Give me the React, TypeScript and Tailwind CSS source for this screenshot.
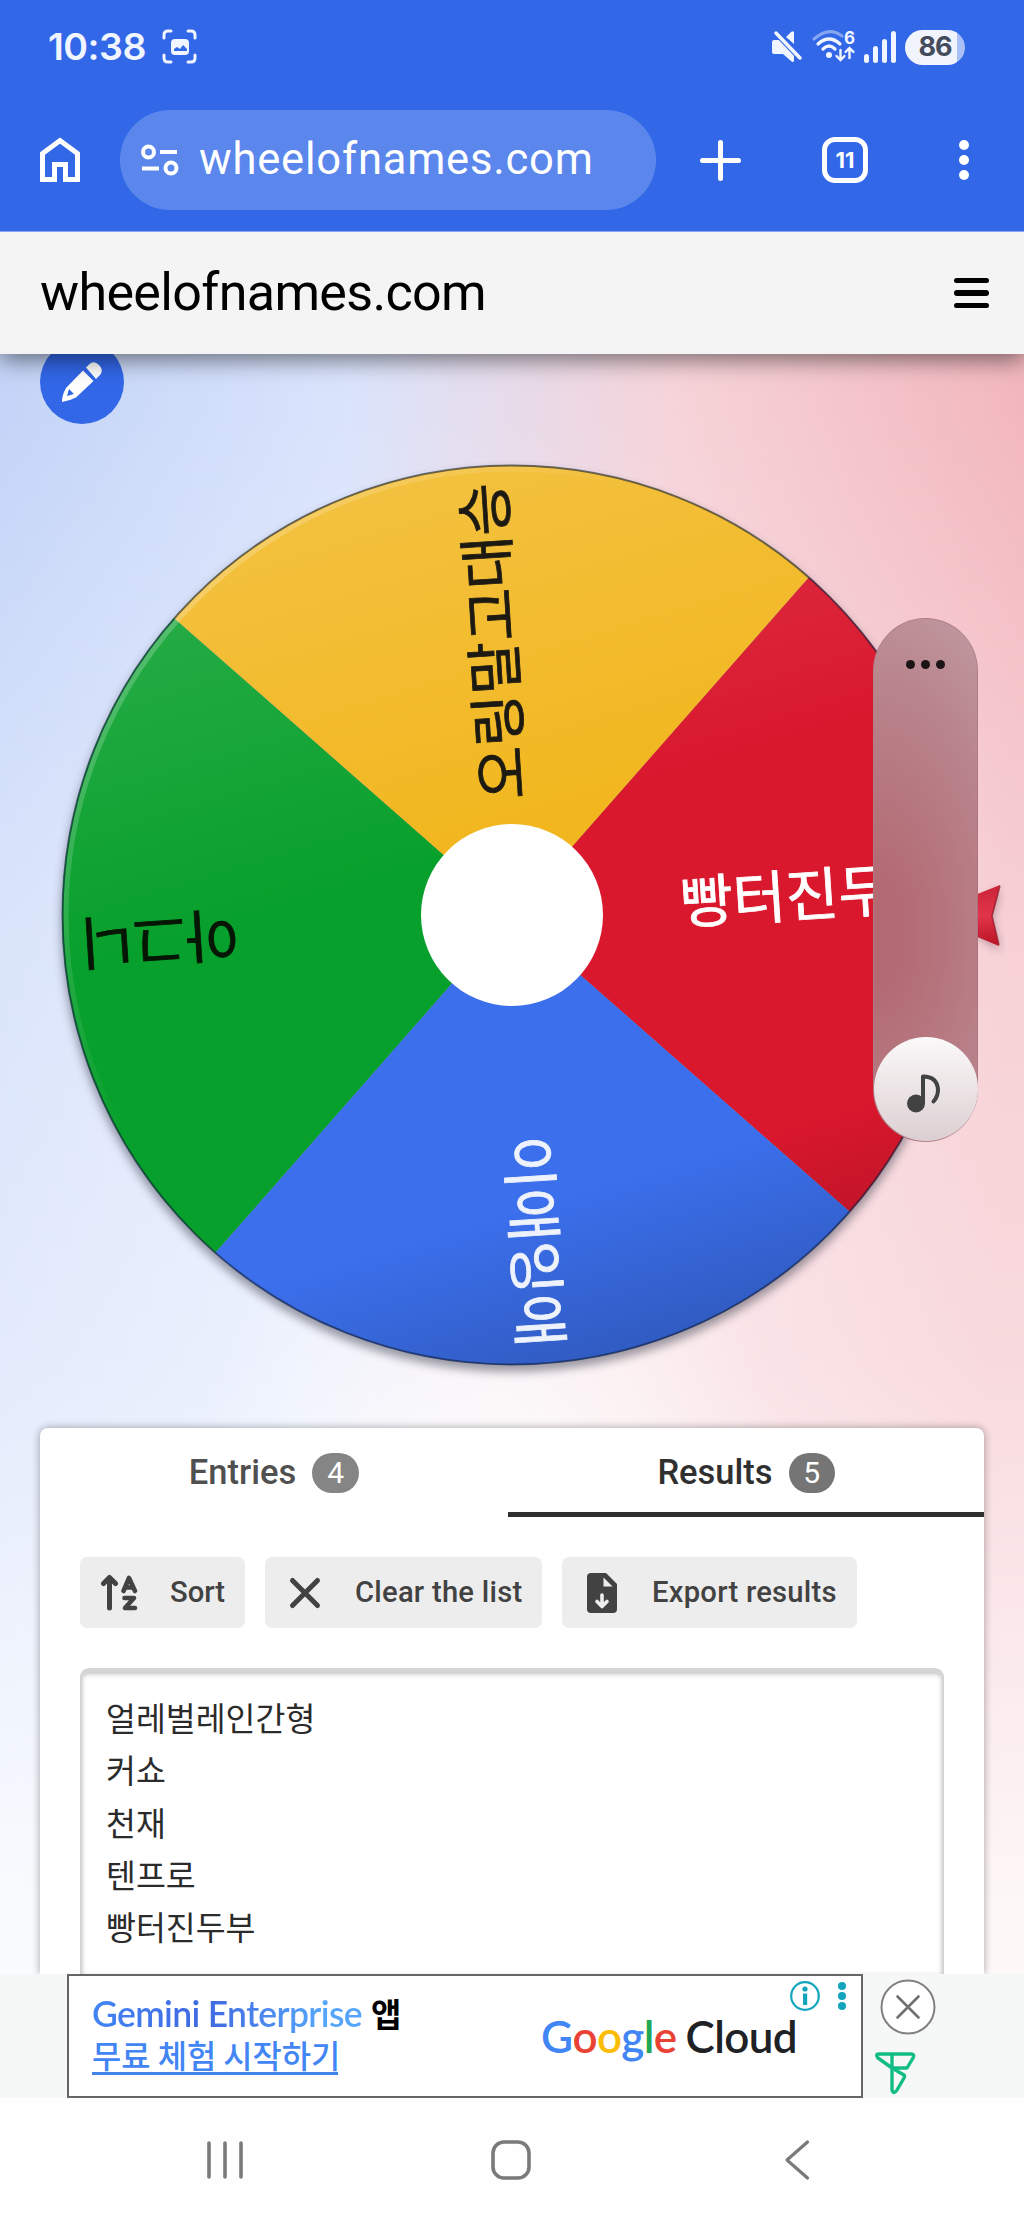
import type { ReactNode } from "react"

const slices = [
  { label: "빵터진두부", angle: -3.7, fill: "#d9172d", text: "#ffffff" },
  { label: "이애잉애", angle: 86.3, fill: "#3b6fec", text: "#eef2fc" },
  { label: "아그니", angle: 176.3, fill: "#08a02c", text: "#051605" },
  { label: "오링말고대승", angle: 266.3, fill: "#f2b71f", text: "#1c1a12" },
]

const results = ["얼레벌레인간형", "커쇼", "천재", "텐프로", "빵터진두부"]

function StatusBar() {
  return (
    <div className="flex h-[94px] items-center pl-12 pr-[59px] text-[#f0f5ff]">
      <span className="w-[99px] whitespace-nowrap font-[Inter] text-[37.500px] font-semibold leading-none tracking-[-0.500px]">10:38</span>
      <svg className="ml-[15px]" width="36" height="36" viewBox="0 0 36 36" fill="none" stroke="currentColor" strokeWidth="3" strokeLinecap="round">
        <path d="M2 9V6q0-4 4-4h3M26 2h3q4 0 4 4v3M33 26v3q0 4-4 4h-3M9 33H6q-4 0-4-4v-3" />
        <rect x="9" y="10" width="18" height="16" rx="4" fill="currentColor" stroke="none" />
        <path d="M12 22v-2l3-2 3 2 3-4 4 4v2z" fill="#3267e8" stroke="none" />
      </svg>
      <div className="ml-auto flex items-center">
        <svg width="32" height="34" viewBox="0 0 32 34" fill="currentColor">
          <path d="M3 10h7l13 12v9q-1 2-3 0l-8-7H3q-2 0-2-2V12q0-2 2-2zM15 7l5-5q3-2 3 1v11z" />
          <path d="M5 3l24 25" stroke="#3267e8" strokeWidth="5.500" />
          <path d="M5 3l24 25" stroke="currentColor" strokeWidth="3.500" strokeLinecap="round" />
        </svg>
        <svg className="ml-2 overflow-visible" width="46" height="34" viewBox="0 0 46 34" fill="none" stroke="currentColor" strokeWidth="3.200" strokeLinecap="round">
          <path d="M3 9q15-13 28-3" opacity=".45" />
          <path d="M7 14q11-10 22 0M12 19q6-6 12 0" />
          <circle cx="18" cy="25" r="3" fill="currentColor" stroke="none" />
          <path d="M29.500 20v10m-4-4l4 4 4-4M38.500 28V18m-4 4l4-4 4 4" strokeWidth="2.400" />
          <text x="33" y="14" fontSize="17" fontWeight="700" fontFamily="Inter" fill="currentColor" stroke="none">6</text>
        </svg>
        <div className="ml-[7px] flex h-8 items-end gap-1">
          <i className="h-[9px] w-[5px] rounded-full bg-[#f0f5ff]" />
          <i className="h-[17px] w-[5px] rounded-full bg-[#f0f5ff]" />
          <i className="h-[24px] w-[5px] rounded-full bg-[#f0f5ff]" />
          <i className="h-[32px] w-[5px] rounded-full bg-[#f0f5ff]" />
        </div>
        <div className="ml-[9px] flex h-[35px] w-[60px] items-center justify-center rounded-full bg-[linear-gradient(90deg,#f1f4fd_86%,#a9c0f6_86%)] font-[Inter] text-[27px] font-bold tracking-[-1px] text-[#444b5c]">
          86
        </div>
      </div>
    </div>
  )
}

function BrowserBar() {
  return (
    <div className="mt-4 flex h-[100px] items-center text-white">
      <svg className="ml-10" width="40" height="46" viewBox="0 0 40 46" fill="none" stroke="white" strokeWidth="5">
        <path d="M2.500 42.500V16.500L20 3.500l17.500 13v26h-12v-15h-11v15z" />
      </svg>
      <div className="ml-10 flex h-full w-[536px] items-center rounded-full bg-[#5b87ed] pl-5">
        <svg width="40" height="34" viewBox="0 0 40 34" fill="none" stroke="white" strokeWidth="4">
          <circle cx="8.500" cy="9" r="5.500" />
          <circle cx="31" cy="25" r="5.500" />
          <path d="M20 9h17M2 25.500h17" />
        </svg>
        <span className="ml-[19px] whitespace-nowrap font-[Roboto] text-[43.500px] leading-none tracking-[0.800px]">wheelofnames.com</span>
      </div>
      <svg className="ml-[44px]" width="41" height="41" viewBox="0 0 41 41" stroke="white" strokeWidth="5" strokeLinecap="round">
        <path d="M20.500 2.500v36M2.500 20.500h36" />
      </svg>
      <div className="ml-[81px] flex size-[46px] items-center justify-center rounded-[13px] border-[5px] border-white font-[Inter] text-[22px] font-bold">
        11
      </div>
      <div className="ml-[91px] flex flex-col gap-[5px]">
        <i className="size-[10px] rounded-full bg-white" />
        <i className="size-[10px] rounded-full bg-white" />
        <i className="size-[10px] rounded-full bg-white" />
      </div>
    </div>
  )
}

function SiteBar() {
  return (
    <div className="relative z-10 flex h-[122px] items-center justify-between bg-[#f4f4f4] pl-10 pr-[35px] shadow-[0_6px_22px_rgba(0,0,0,0.5)]">
      <span className="font-[Roboto] text-[52px] leading-none tracking-[-0.650px] text-black">wheelofnames.com</span>
      <div className="flex w-[35px] flex-col gap-[7px] pb-px">
        <i className="h-[5px] rounded-full bg-black" />
        <i className="h-[6px] rounded-full bg-black" />
        <i className="h-[5px] rounded-full bg-black" />
      </div>
    </div>
  )
}

function Wheel() {
  return (
    <svg className="absolute left-0 top-0" width="1024" height="1073" viewBox="0 354 1024 1073">
      <defs>
        <linearGradient id="shine" x1="0.350" y1="0" x2="0.650" y2="1">
          <stop offset="0" stopColor="#fff" stopOpacity=".15" />
          <stop offset=".42" stopColor="#fff" stopOpacity="0" />
          <stop offset=".8" stopColor="#000" stopOpacity="0" />
          <stop offset="1" stopColor="#000" stopOpacity=".2" />
        </linearGradient>
        <linearGradient id="rim" x1="0" y1="0" x2="1" y2="0.800">
          <stop offset="0" stopColor="#fff" stopOpacity=".35" />
          <stop offset=".4" stopColor="#fff" stopOpacity="0" />
        </linearGradient>
        <linearGradient id="pointer" x1="0" y1="0" x2="0" y2="1">
          <stop offset="0" stopColor="#c92438" />
          <stop offset=".5" stopColor="#e3344a" />
          <stop offset="1" stopColor="#b81325" />
        </linearGradient>
        <filter id="soft" x="-10%" y="-10%" width="120%" height="120%">
          <feGaussianBlur stdDeviation="5" />
        </filter>
      </defs>
      <circle cx="512" cy="921" r="451" fill="#3c3c50" opacity=".5" filter="url(#soft)" />
      {slices.map((slice) => (
        <path
          key={slice.label}
          d="M0 0L318.200 -318.200A450 450 0 0 1 318.200 318.200Z"
          transform={`translate(512 915) rotate(${slice.angle})`}
          fill={slice.fill}
        />
      ))}
      <circle cx="512" cy="915" r="450" fill="url(#shine)" />
      {slices.map((slice) => (
        <text
          key={slice.label}
          x="433"
          y="20"
          transform={`translate(512 915) rotate(${slice.angle})`}
          textAnchor="end"
          fontSize="57.500"
          fontFamily="'Noto Sans CJK KR', sans-serif"
          fill={slice.text}
          stroke={slice.text}
          strokeWidth="0.800"
        >
          {slice.label}
        </text>
      ))}
      <circle cx="512" cy="915" r="446" fill="none" stroke="url(#rim)" strokeWidth="5" />
      <circle cx="512" cy="915" r="449.500" fill="none" stroke="#10203a" strokeOpacity=".6" strokeWidth="2" />
      <circle cx="512" cy="915" r="91" fill="#fff" />
      <path d="M950 918L1000 890l-8 29 8 31z" fill="#3c2030" opacity=".4" filter="url(#soft)" />
      <path d="M925 915L1000 885l-8 31 7 30z" fill="url(#pointer)" />
      <path d="M1000 886l-8 30 7 29" fill="none" stroke="#8e0f1e" strokeOpacity=".7" strokeWidth="1.500" />
    </svg>
  )
}

function VolumeSlider() {
  return (
    <div className="absolute left-[873px] top-[264px] flex h-[524px] w-[105px] flex-col items-center justify-between rounded-full border border-[#a87880]/60 bg-[radial-gradient(ellipse_190px_360px_at_0%_60%,#b36a73_15%,#b9858d_70%,#c0989f)]">
      <div className="mt-[41px] flex gap-[6px]">
        <i className="size-[9px] rounded-full bg-[#1c1416]" />
        <i className="size-[9px] rounded-full bg-[#1c1416]" />
        <i className="size-[9px] rounded-full bg-[#1c1416]" />
      </div>
      <div className="flex size-[104px] shrink-0 items-center justify-center rounded-full bg-linear-to-b from-[#fbf9f9] to-[#dccfd2] pr-1 pt-[7px]">
        <svg width="36" height="40" viewBox="0 0 36 40">
          <circle cx="10" cy="30.500" r="9" fill="#424242" />
          <path d="M17 30V3.500q14 0 15 13 0 7-4.500 12" fill="none" stroke="#424242" strokeWidth="4" strokeLinecap="round" strokeLinejoin="round" />
        </svg>
      </div>
    </div>
  )
}

function WheelArea() {
  return (
    <div className="relative h-[1074px]">
      <Wheel />
      <div className="absolute left-10 top-[-14px] flex size-[84px] items-center justify-center rounded-full bg-[#3267e8]">
        <svg width="42" height="42" viewBox="0 0 42 42" fill="white">
          <path d="M22 9.500L32.500 20 15 36.500Q8 40 1 41q0-7 4-14zM8 28l-2 7 7-2zM25 6.500l3-3Q33-1 38 4t1 10l-4 4z" fillRule="evenodd" />
        </svg>
      </div>
      <VolumeSlider />
    </div>
  )
}

function ToolButton({ icon, label, className }: { icon: ReactNode; label: string; className: string }) {
  return (
    <button className={`flex h-[71px] items-center rounded-[7px] bg-[#ededed] pl-5 text-[29.200px] font-medium text-[#424242] ${className}`}>
      {icon}
      <span className="ml-[30px] whitespace-nowrap leading-none">{label}</span>
    </button>
  )
}

function ResultsPanel() {
  return (
    <div className="mx-10 h-[546px] rounded-t-lg bg-white font-[Roboto] shadow-[0_0_9px_rgba(0,0,0,0.35)]">
      <div className="flex h-[89px]">
        <div className="flex w-[468px] items-center justify-center text-[34.500px] font-medium text-[#505050]">
          Entries
          <span className="ml-4 flex h-10 w-[47px] items-center justify-center rounded-full bg-[#858585] text-[30px] font-normal text-white">4</span>
        </div>
        <div className="flex w-[476px] items-center justify-center border-b-[5px] border-[#303030] pt-[5px] text-[34.500px] font-medium text-[#303030]">
          Results
          <span className="ml-4 flex h-10 w-[46px] items-center justify-center rounded-full bg-[#757575] text-[30px] font-normal text-white">5</span>
        </div>
      </div>
      <div className="flex gap-5 px-10 pt-10">
        <ToolButton
          className="w-[165px]"
          label="Sort"
          icon={
            <svg width="40" height="40" viewBox="0 0 40 40" fill="none" stroke="#424242" strokeWidth="5" strokeLinecap="round" strokeLinejoin="round">
              <path d="M9.500 35V5M3.500 10.500l6-6 6 6" />
              <path d="M23.500 18l5.500-13 6 13M26 14.500h7M24.500 25H34l-9 10h10" strokeWidth="4.600" />
            </svg>
          }
        />
        <ToolButton
          className="w-[277px] tracking-[0.250px]"
          label="Clear the list"
          icon={
            <svg width="40" height="40" viewBox="0 0 40 40" stroke="#424242" strokeWidth="5" strokeLinecap="round">
              <path d="M7.500 7.500l25 25M32.500 7.500l-25 25" />
            </svg>
          }
        />
        <ToolButton
          className="w-[295px] tracking-[0.250px]"
          label="Export results"
          icon={
            <svg width="40" height="40" viewBox="0 0 40 40" fill="#424242">
              <path d="M9 0h15l11 11v25q0 4-4 4H9q-4 0-4-4V4q0-4 4-4z" />
              <path d="M21.500 4.500v9h9z" fill="#ededed" />
              <path d="M20 22v11M15 28.500l5 5 5-5" fill="none" stroke="#ededed" strokeWidth="3.600" strokeLinecap="round" strokeLinejoin="round" />
            </svg>
          }
        />
      </div>
      <div className="mx-10 mt-10 h-[306px] rounded-t-[9px] border-x-2 border-t-4 border-[#d4d4d4] pl-[24px] pt-[19px] font-['Noto_Sans_CJK_KR',sans-serif] text-[32.500px] leading-[52.300px] text-[#2b2b2b] shadow-[inset_0_2px_5px_rgba(0,0,0,0.25)]">
        {results.map((name) => (
          <div key={name}>{name}</div>
        ))}
      </div>
    </div>
  )
}

function AdBanner() {
  return (
    <div className="flex h-[124px] bg-[#f6f7f7] pl-[67px]">
      <div className="relative flex h-full w-[796px] items-center border-2 border-[#666] bg-white pl-[23px]">
        <div className="w-[449px] pb-[5px]">
          <div className="flex h-[41px] items-center gap-[9px] whitespace-nowrap leading-[41px]">
            <span className="bg-[linear-gradient(90deg,#4285f4,#4169e1_42%,#55a5fa_85%)] bg-clip-text font-[Lato] text-[35.500px] font-semibold tracking-[-0.650px] text-transparent">
              Gemini Enterprise
            </span>
            <b className="font-['Noto_Sans_CJK_KR'] text-[33px]">앱</b>
          </div>
          <div className="mt-[3px] w-[246px] whitespace-nowrap border-b-[3px] border-[#4285e8] font-['Noto_Sans_CJK_KR'] text-[31.800px] font-medium leading-[35px] text-[#4285f4]">
            무료 체험 시작하기
          </div>
        </div>
        <div className="flex whitespace-nowrap font-[Lato] text-[44px] font-semibold tracking-[-0.650px] text-[#202124]">
          <span className="text-[#4285f4]">G</span>
          <span className="text-[#ea4335]">o</span>
          <span className="text-[#fbbc04]">o</span>
          <span className="text-[#4285f4]">g</span>
          <span className="text-[#1fa855]">l</span>
          <span className="mr-[9px] text-[#ea4335]">e</span>
          Cloud
        </div>
        <svg className="absolute right-[12px] top-1" width="60" height="32" viewBox="0 0 60 32" fill="#12a5bd">
          <circle cx="16" cy="16" r="13.800" fill="none" stroke="#12a5bd" strokeWidth="2.200" />
          <circle cx="16" cy="9" r="2.600" />
          <path d="M14 13.500h4.200V25H14z" />
          <circle cx="53" cy="6" r="4" />
          <circle cx="53" cy="16" r="4" />
          <circle cx="53" cy="26" r="4" />
        </svg>
      </div>
      <svg className="ml-3" width="64" height="124" viewBox="875 1974 64 124" fill="none">
        <circle cx="908" cy="2007" r="26.500" fill="#fff" stroke="#808080" strokeWidth="2" />
        <path d="M897.500 1996.500l21 21M918.500 1996.500l-21 21" stroke="#707070" strokeWidth="2.600" strokeLinecap="round" />
        <path d="M892 2068l-14-10q-3-4 1-4h32q4 0 2 4l-6 10h-15zM892 2054v36q2 5 5 0l7-12q1-2 0-3l-12-7" stroke="#12bd85" strokeWidth="3.400" strokeLinejoin="round" strokeLinecap="round" />
      </svg>
    </div>
  )
}

function SystemNav() {
  return (
    <div className="flex h-[120px] items-center bg-[#fefefe]">
      <svg width="1024" height="120" viewBox="0 2098 1024 120" fill="none" stroke="#7a7a7a" strokeWidth="3.600" strokeLinecap="round" strokeLinejoin="round">
        <path d="M209 2143v34M225 2143v34M241 2143v34" />
        <rect x="493" y="2142" width="36" height="36" rx="11" />
        <path d="M807.500 2142L787 2160l20.500 18" strokeWidth="3.200" />
      </svg>
    </div>
  )
}

export default function App() {
  return (
    <div className="flex h-[2218px] w-[1024px] flex-col overflow-hidden bg-white">
      <header className="relative z-20 h-[232px] shrink-0 border-b border-[#87a5f0] bg-[#3267e8]">
        <StatusBar />
        <BrowserBar />
      </header>
      <main className="h-[1742px] shrink-0 bg-[radial-gradient(ellipse_300px_420px_at_48%_74%,rgba(255,255,255,0.8),transparent),linear-gradient(180deg,transparent_10%,rgba(255,255,255,0.36)_40%,rgba(255,255,255,0.5)_65%,rgba(255,255,255,0.9)_97%),linear-gradient(93deg,#c3d4f8,#dae4fc_32%,#f6d3d8_62%,#f2b6bd_94%)]">
        <SiteBar />
        <WheelArea />
        <ResultsPanel />
      </main>
      <AdBanner />
      <SystemNav />
    </div>
  )
}
